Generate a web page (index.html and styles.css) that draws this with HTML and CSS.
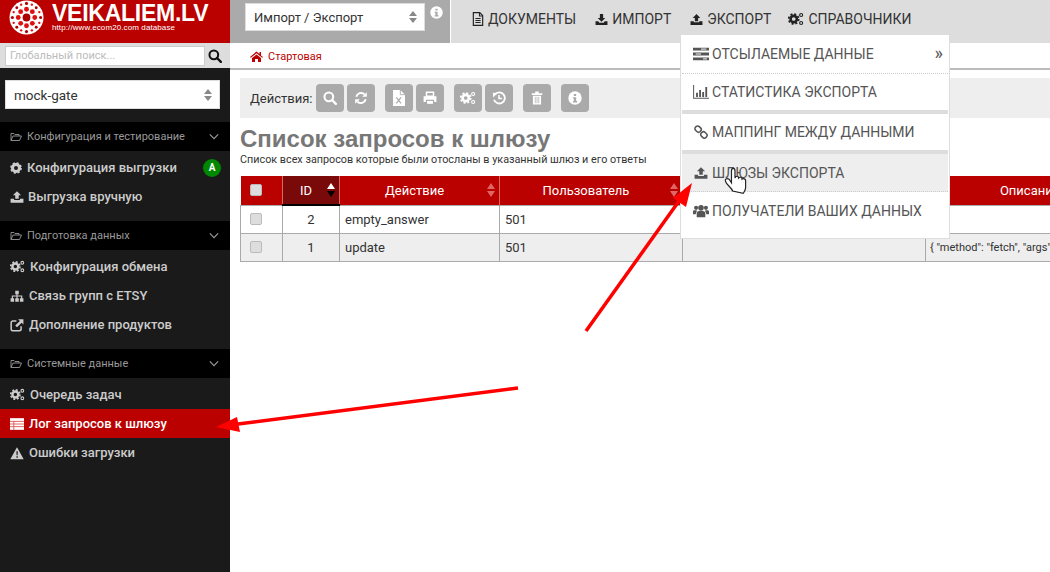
FILE: index.html
```html
<!DOCTYPE html>
<html lang="ru">
<head>
<meta charset="utf-8">
<title>Список запросов к шлюзу</title>
<link rel="stylesheet" href="styles.css">
</head>
<body>
<svg class="defs" width="0" height="0" aria-hidden="true">
  <defs>
    <symbol id="i-folder" viewBox="0 0 24 20"><path d="M2 17V3h6l2 2h8v3M2 17l4-9h17l-4 9H2z" fill="none" stroke="currentColor" stroke-width="1.8" stroke-linejoin="round"/></symbol>
    <symbol id="i-chev" viewBox="0 0 12 8"><path d="M1 1.500l5 5 5-5" fill="none" stroke="currentColor" stroke-width="1.400"/></symbol>
    <symbol id="i-cog" viewBox="0 0 24 24"><circle cx="12" cy="12" r="7" fill="none" stroke="currentColor" stroke-width="6"/><circle cx="12" cy="12" r="10" fill="none" stroke="currentColor" stroke-width="3.5" stroke-dasharray="4.2 3.65"/></symbol>
    <symbol id="i-cogs" viewBox="0 0 28 24"><circle cx="10" cy="12" r="5.5" fill="none" stroke="currentColor" stroke-width="4.5"/><circle cx="10" cy="12" r="8.7" fill="none" stroke="currentColor" stroke-width="3" stroke-dasharray="3.6 3.2"/><circle cx="23" cy="5" r="2.6" fill="none" stroke="currentColor" stroke-width="2"/><circle cx="23" cy="19" r="2.6" fill="none" stroke="currentColor" stroke-width="2"/></symbol>
    <symbol id="i-upload" viewBox="0 0 24 24"><path d="M12 2l7 7h-4v6H9V9H5z" fill="currentColor"/><path d="M1 15h6v2h10v-2h6v7H1z" fill="currentColor"/></symbol>
    <symbol id="i-download" viewBox="0 0 24 24"><path d="M9 2h6v7h4l-7 7-7-7h4z" fill="currentColor"/><path d="M1 15h5l2 3h8l2-3h5v7H1z" fill="currentColor"/></symbol>
    <symbol id="i-sitemap" viewBox="0 0 24 24"><path d="M9 3h6v6h-2v2h8v5h2v6h-6v-6h2v-3h-6v3h2v6H9v-6h2v-3H5v3h2v6H1v-6h2v-5h8V9H9z" fill="currentColor"/></symbol>
    <symbol id="i-ext" viewBox="0 0 24 24"><path d="M11 5H5a3 3 0 0 0-3 3v11a3 3 0 0 0 3 3h11a3 3 0 0 0 3-3v-5" fill="none" stroke="currentColor" stroke-width="2.6"/><path d="M14 2h9v9l-3-3-8 8-3-3 8-8z" fill="currentColor"/></symbol>
    <symbol id="i-table" viewBox="0 0 24 20"><path d="M0 0h24v20H0z" fill="currentColor"/><path d="M0 5.500h24M0 10h24M0 14.500h24M6.500 5v15" stroke="#e05050" stroke-width="1.500" fill="none"/></symbol>
    <symbol id="i-warn" viewBox="0 0 24 22"><path d="M12 1l11.500 20.500H.5z" fill="currentColor"/><path d="M11 8h2.400l-.3 7h-1.800zM11 16.500h2.400v2.500H11z" fill="#1a1a1a"/></symbol>
    <symbol id="i-home" viewBox="0 0 26 22"><path d="M13 1l6 5V2h3v7l4 3-1.500 1.700L13 4.500 1.500 13.700 0 12z" fill="currentColor"/><path d="M4 14l9-7 9 7v8h-6v-6h-6v6H4z" fill="currentColor"/></symbol>
    <symbol id="i-search" viewBox="0 0 24 24"><circle cx="10" cy="10" r="7.500" fill="none" stroke="currentColor" stroke-width="3.500"/><path d="M15.500 15.500L22 22" stroke="currentColor" stroke-width="4" stroke-linecap="round"/></symbol>
    <symbol id="i-refresh" viewBox="0 0 24 24"><path d="M4 10a8.500 8.500 0 0 1 14-4.500M20 14a8.500 8.500 0 0 1-14 4.500" fill="none" stroke="currentColor" stroke-width="3.400"/><path d="M22 2v8h-8zM2 22v-8h8z" fill="currentColor"/></symbol>
    <symbol id="i-excel" viewBox="0 0 18 24"><path d="M0 0h11l7 7v17H0z" fill="currentColor"/><path d="M11 0v7h7" fill="none" stroke="#aaa" stroke-width="1.300"/><path d="M5 11l7 9M12 11l-7 9" stroke="#aaa" stroke-width="1.800"/></symbol>
    <symbol id="i-print" viewBox="0 0 24 24"><path d="M6 2h12v7H6z" fill="none" stroke="currentColor" stroke-width="2.500"/><path d="M1 9h22v10h-4v-4H5v4H1z" fill="currentColor"/><path d="M7 17h10v5H7z" fill="currentColor"/></symbol>
    <symbol id="i-history" viewBox="0 0 24 24"><path d="M5 6a9.500 9.500 0 1 1-1.500 9" fill="none" stroke="currentColor" stroke-width="3.200"/><path d="M1.500 3l8 .5L2 11z" fill="currentColor"/><path d="M12 7v6h5" fill="none" stroke="currentColor" stroke-width="2.600"/></symbol>
    <symbol id="i-trash" viewBox="0 0 20 24"><path d="M1 4h18v3H1zM7 1h6v3H7zM3 8h14v15H3z" fill="currentColor"/><path d="M7 10v11M10 10v11M13 10v11" stroke="#aaa" stroke-width="1.200"/></symbol>
    <symbol id="i-info" viewBox="0 0 24 24"><circle cx="12" cy="12" r="11.500" fill="currentColor"/><path d="M10 5h4v3.500h-4zM8.500 10.500H14V17h1.700v2.500H8.500V17H10v-4H8.500z" fill="#aaa"/></symbol>
    <symbol id="i-doc" viewBox="0 0 20 24"><path d="M2 1h11l5 5v17H2z" fill="none" stroke="currentColor" stroke-width="2"/><path d="M12.500 1v6H18M5.500 11h9M5.500 14.500h9M5.500 18h9" fill="none" stroke="currentColor" stroke-width="1.800"/></symbol>
    <symbol id="i-tasks" viewBox="0 0 24 20" preserveAspectRatio="none"><path d="M0 1h24v4H0zM0 8h24v4H0zM0 15h24v4H0z" fill="currentColor"/><path d="M12 3h8M4 10h8M15 17h6" stroke="#fff" stroke-width="1.400"/></symbol>
    <symbol id="i-chart" viewBox="0 0 26 20" preserveAspectRatio="none"><path d="M1 0v19h25" fill="none" stroke="currentColor" stroke-width="1.600"/><path d="M5 11h3v6H5zM10 7h3v10h-3zM15 10h3v7h-3zM20 3h3v14h-3z" fill="currentColor"/></symbol>
    <symbol id="i-link" viewBox="0 0 24 24"><rect x="1.500" y="2.500" width="11" height="9" rx="4" transform="rotate(45 7 7)" fill="none" stroke="currentColor" stroke-width="2.600"/><rect x="11.500" y="12.500" width="11" height="9" rx="4" transform="rotate(45 17 17)" fill="none" stroke="currentColor" stroke-width="2.600"/></symbol>
    <symbol id="i-users" viewBox="0 0 26 22" preserveAspectRatio="none"><circle cx="13" cy="6" r="4.500" fill="currentColor"/><circle cx="5" cy="6" r="3.300" fill="currentColor"/><circle cx="21" cy="6" r="3.300" fill="currentColor"/><path d="M6 21v-6a4 4 0 0 1 4-4h6a4 4 0 0 1 4 4v6zM0 16v-4a2 2 0 0 1 2-2h4v2a5 5 0 0 0-1.500 4zM26 16v-4a2 2 0 0 0-2-2h-4v2a5 5 0 0 1 1.500 4z" fill="currentColor"/></symbol>
  </defs>
</svg>

<aside class="sidebar">
  <div class="logo">
    <svg class="logo-mark" viewBox="0 0 36 36" aria-hidden="true">
      <circle cx="18" cy="18" r="17.500" fill="#fff"/>
      <g fill="#a00">
        <circle cx="18" cy="18" r="4"/>
        <circle cx="18" cy="32.500" r="1.600"/><circle cx="18" cy="3.500" r="1.600"/><circle cx="3.500" cy="18" r="1.600"/><circle cx="32.500" cy="18" r="1.600"/>
        <circle cx="8" cy="8" r="1.500"/><circle cx="28" cy="8" r="1.500"/><circle cx="8" cy="28" r="1.500"/><circle cx="28" cy="28" r="1.500"/>
      </g>
      <g fill="#d11">
        <circle cx="18" cy="9.500" r="2.500"/><circle cx="18" cy="26.500" r="2.500"/><circle cx="9.500" cy="18" r="2.500"/><circle cx="26.500" cy="18" r="2.500"/>
        <circle cx="12" cy="12" r="2.500"/><circle cx="24" cy="12" r="2.500"/><circle cx="12" cy="24" r="2.500"/><circle cx="24" cy="24" r="2.500"/>
        <circle cx="12.500" cy="4.800" r="1.200"/><circle cx="23.500" cy="4.800" r="1.200"/><circle cx="12.500" cy="31.200" r="1.200"/><circle cx="23.500" cy="31.200" r="1.200"/>
        <circle cx="4.800" cy="12.500" r="1.200"/><circle cx="31.200" cy="12.500" r="1.200"/><circle cx="4.800" cy="23.500" r="1.200"/><circle cx="31.200" cy="23.500" r="1.200"/>
      </g>
    </svg>
    <div class="logo-text">
      <div class="logo-name">VEIKALIEM.LV</div>
      <div class="logo-url">http://www.ecom20.com database</div>
    </div>
  </div>
  <div class="global-search">
    <div class="search-input">Глобальный поиск...</div>
    <svg class="search-icon"><use href="#i-search"/></svg>
  </div>
  <div class="gate-wrap">
    <div class="select gate-select">mock-gate<span class="updown"></span></div>
  </div>

  <div class="side-head"><svg class="fold"><use href="#i-folder"/></svg><span>Конфигурация и тестирование</span><svg class="chev"><use href="#i-chev"/></svg></div>
  <ul class="side-list">
    <li class="side-item"><svg class="si si-cog"><use href="#i-cog"/></svg><span>Конфигурация выгрузки</span><b class="badge">A</b></li>
    <li class="side-item"><svg class="si si-up"><use href="#i-upload"/></svg><span>Выгрузка вручную</span></li>
  </ul>

  <div class="side-head"><svg class="fold"><use href="#i-folder"/></svg><span>Подготовка данных</span><svg class="chev"><use href="#i-chev"/></svg></div>
  <ul class="side-list">
    <li class="side-item"><svg class="si si-cogs"><use href="#i-cogs"/></svg><span>Конфигурация обмена</span></li>
    <li class="side-item"><svg class="si"><use href="#i-sitemap"/></svg><span>Связь групп с ETSY</span></li>
    <li class="side-item"><svg class="si"><use href="#i-ext"/></svg><span>Дополнение продуктов</span></li>
  </ul>

  <div class="side-head"><svg class="fold"><use href="#i-folder"/></svg><span>Системные данные</span><svg class="chev"><use href="#i-chev"/></svg></div>
  <ul class="side-list">
    <li class="side-item"><svg class="si si-cogs"><use href="#i-cogs"/></svg><span>Очередь задач</span></li>
    <li class="side-item active"><svg class="si"><use href="#i-table"/></svg><span>Лог запросов к шлюзу</span></li>
    <li class="side-item"><svg class="si"><use href="#i-warn"/></svg><span>Ошибки загрузки</span></li>
  </ul>
</aside>

<div class="main">
  <header class="topbar">
    <div class="module">
      <div class="select module-select">Импорт / Экспорт<span class="updown"></span></div>
      <svg class="module-info"><use href="#i-info"/></svg>
    </div>
    <nav class="topnav">
      <a class="nav-link"><svg class="ni ni-doc"><use href="#i-doc"/></svg>ДОКУМЕНТЫ</a>
      <a class="nav-link"><svg class="ni"><use href="#i-download"/></svg>ИМПОРТ</a>
      <a class="nav-link"><svg class="ni"><use href="#i-upload"/></svg>ЭКСПОРТ</a>
      <a class="nav-link nav-last"><svg class="ni ni-cogs"><use href="#i-cogs"/></svg>СПРАВОЧНИКИ</a>
    </nav>
  </header>

  <div class="crumbs"><svg class="crumb-home"><use href="#i-home"/></svg><span>Стартовая</span></div>

  <div class="actions">
    <span class="actions-label">Действия:</span>
    <div class="btn-group">
      <button class="act"><svg class="ai"><use href="#i-search"/></svg></button>
      <button class="act"><svg class="ai"><use href="#i-refresh"/></svg></button>
    </div>
    <div class="btn-group">
      <button class="act"><svg class="ai ai-file"><use href="#i-excel"/></svg></button>
      <button class="act"><svg class="ai"><use href="#i-print"/></svg></button>
    </div>
    <div class="btn-group">
      <button class="act"><svg class="ai ai-wide"><use href="#i-cogs"/></svg></button>
      <button class="act"><svg class="ai"><use href="#i-history"/></svg></button>
    </div>
    <div class="btn-group">
      <button class="act"><svg class="ai"><use href="#i-trash"/></svg></button>
    </div>
    <div class="btn-group">
      <button class="act"><svg class="ai"><use href="#i-info"/></svg></button>
    </div>
  </div>

  <h1 class="page-title">Список запросов к шлюзу</h1>
  <p class="page-sub">Список всех запросов которые были отосланы в указанный шлюз и его ответы</p>

  <table class="grid">
    <colgroup>
      <col class="c-check"><col class="c-id"><col class="c-action"><col class="c-user"><col class="c-blank"><col class="c-desc">
    </colgroup>
    <thead>
      <tr>
        <th><span class="check"></span></th>
        <th class="sorted has-sort">ID<span class="sort sort-on"></span></th>
        <th class="has-sort">Действие<span class="sort"></span></th>
        <th class="has-sort">Пользователь<span class="sort"></span></th>
        <th></th>
        <th>Описание</th>
      </tr>
    </thead>
    <tbody>
      <tr>
        <td class="center"><span class="check"></span></td>
        <td class="center">2</td>
        <td>empty_answer</td>
        <td>501</td>
        <td></td>
        <td></td>
      </tr>
      <tr class="alt">
        <td class="center"><span class="check"></span></td>
        <td class="center">1</td>
        <td>update</td>
        <td>501</td>
        <td></td>
        <td class="desc">{ "method": "fetch", "args": [] }</td>
      </tr>
    </tbody>
  </table>

  <div class="dropdown">
    <div class="dd-item dd-first"><svg class="di"><use href="#i-tasks"/></svg>ОТСЫЛАЕМЫЕ ДАННЫЕ<span class="dd-more">»</span></div>
    <div class="dd-item dd-band"><svg class="di"><use href="#i-chart"/></svg>СТАТИСТИКА ЭКСПОРТА</div>
    <div class="dd-item dd-band"><svg class="di"><use href="#i-link"/></svg>МАППИНГ МЕЖДУ ДАННЫМИ</div>
    <div class="dd-item dd-dotted dd-hover"><svg class="di"><use href="#i-upload"/></svg>ШЛЮЗЫ ЭКСПОРТА</div>
    <div class="dd-item"><svg class="di"><use href="#i-users"/></svg>ПОЛУЧАТЕЛИ ВАШИХ ДАННЫХ</div>
  </div>
</div>

<svg class="annot" viewBox="0 0 1050 572" aria-hidden="true">
  <path d="M586 331L679 201" stroke="#f00" stroke-width="3.500" fill="none"/>
  <path d="M692 183L686 207 673 198z" fill="#f00"/>
  <path d="M518 388L238 424" stroke="#f00" stroke-width="3.500" fill="none"/>
  <path d="M216 427L237 417 240 432z" fill="#f00"/>
  <path transform="translate(735 191) scale(1.180) translate(-735 -184)" d="M733 184c-1-3-5-5-6-8-1-2 1-3 3-2l2 3v-10c0-3 3-3 3 0v6c1-2 3-2 3 0 1-1 3-1 3 1 1-1 3 0 3 1v6c0 2-1 3-2 5z" fill="#fff" stroke="#222" stroke-width="1"/>
</svg>
</body>
</html>
```
FILE: styles.css
```css
* { box-sizing: border-box; }
html, body { margin: 0; padding: 0; }
body {
  width: 1050px;
  height: 572px;
  overflow: hidden;
  display: flex;
  position: relative;
  background: #fff;
  font-family: Roboto, "Liberation Sans", sans-serif;
  font-size: 13px;
  color: #333;
}
.defs { position: absolute; }
svg { display: block; flex: none; }

/* Sidebar */
.sidebar { width: 230px; flex: none; height: 572px; background: #1a1a1a; color: #ccc; }
.logo { height: 43px; background: #b00; display: flex; padding: 0 0 0 9px; gap: 8px; }
.logo-mark { width: 35px; height: 35px; }
.logo-text { color: #fff; padding-top: 3px; }
.logo-name { font: bold 23px/21px "Liberation Sans", sans-serif; letter-spacing: -.25px; }
.logo-url { font: 8px/8px "Liberation Sans", sans-serif; letter-spacing: .1px; }
.global-search { height: 25px; background: #ddd; display: flex; align-items: center; padding-left: 5px; gap: 3px; }
.search-input { width: 200px; height: 20px; background: #fff; border: 1px solid #ccc; color: #bbb; font-size: 11px; line-height: 18px; padding-left: 4px; }
.search-icon { width: 14px; height: 14px; color: #111; }
.gate-wrap { height: 54px; padding: 12px 10px 0 5px; }
.select { background: #fff; border: 1px solid #ddd; color: #333; position: relative; }
.gate-select { height: 29px; line-height: 28px; padding-left: 8px; font-size: 13.500px; }
.updown { position: absolute; right: 7px; top: 50%; margin-top: -6px; width: 0; height: 0; border-left: 4.500px solid transparent; border-right: 4.500px solid transparent; border-bottom: 5px solid #888; }
.updown::after { content: ""; position: absolute; left: -4.500px; top: 7px; width: 0; height: 0; border-left: 4.500px solid transparent; border-right: 4.500px solid transparent; border-top: 5px solid #888; }
.side-head { height: 29px; background: #000; color: #999; font-size: 11px; display: flex; align-items: center; padding-left: 10px; gap: 5px; }
.fold { width: 12px; height: 10px; }
.chev { width: 10px; height: 7px; margin-left: auto; margin-right: 11px; color: #999; }
.side-list { list-style: none; margin: 0; padding: 2px 0 10px; }
.side-item { height: 29px; display: flex; align-items: center; padding-left: 10px; gap: 5px; font-size: 13px; color: #ccc; font-weight: 500; }
.side-item.active { background: #b00; color: #fff; }
.si { width: 14px; height: 14px; }
.si-up { margin-right: -1px; }
.si-cog { width: 12px; height: 12px; }
.si-cogs { width: 15px; height: 13px; }
.badge { margin-left: auto; margin-right: 9px; width: 18px; height: 18px; border-radius: 50%; background: #080; color: #fff; font-size: 10px; line-height: 18px; text-align: center; }

/* Main */
.main { width: 820px; flex: none; height: 572px; position: relative; overflow: hidden; }
.topbar { height: 43px; display: flex; }
.module { width: 220px; background: #aaa; padding: 3px 0 0 15px; display: flex; }
.module-select { width: 180px; height: 28px; line-height: 27px; padding-left: 8px; font-size: 13px; }
.module-info { width: 13px; height: 13px; color: #fff; margin: 3px 0 0 5px; }
.topnav { flex: 1; margin-left: 1px; background: #ddd; display: flex; padding-left: 21px; gap: 19px; align-items: flex-start; }
.nav-link { display: flex; align-items: center; height: 38px; font-size: 14px; color: #333; gap: 4px; }
.nav-last { margin-left: -2px; }
.ni { width: 13px; height: 13px; color: #222; }
.ni-doc { width: 12px; height: 14px; }
.ni-cogs { width: 16px; height: 14px; }
.crumbs { height: 27px; border-bottom: 2px solid #bbb; display: flex; align-items: center; padding: 1px 0 0 20px; gap: 5px; color: #b00; font-size: 11px; }
.crumb-home { width: 13px; height: 11px; }
.actions { height: 40px; margin: 8px 0 0 10px; background: #eee; display: flex; align-items: center; padding-left: 10px; gap: 10px; }
.actions-label { font-size: 13px; color: #333; margin-right: -6px; }
.btn-group { display: flex; gap: 3px; }
.act { width: 28px; height: 28px; padding: 0; border: 0; border-radius: 4px; background: #aaa; color: #fff; display: flex; align-items: center; justify-content: center; }
.ai { width: 14px; height: 14px; }
.ai-wide { width: 16px; }
.ai-file { width: 12px; height: 16px; }
.page-title { margin: 6px 0 0 10px; font: bold 24px/30px "Liberation Sans", sans-serif; color: #777; }
.page-sub { margin: -1px 0 0 10px; font-size: 10.800px; line-height: 13px; color: #333; }

/* Table */
.grid { margin: 10px 0 0 10px; width: 893px; table-layout: fixed; border-collapse: collapse; font-size: 13px; }
.c-check { width: 42px; } .c-id { width: 57px; } .c-action { width: 160px; } .c-user { width: 183px; } .c-blank { width: 243px; } .c-desc { width: 208px; }
.grid th { height: 29px; background: #b00; color: #fff; font-weight: 400; position: relative; border-left: 1px solid #e06666; padding: 0; }
.grid th:first-child { border-left: 0; }
.grid th.has-sort { padding-right: 10px; }
.grid th.sorted { background: #7a0a0a; border-bottom: 2px solid #000; }
.grid td { height: 28px; border: 1px solid #aaa; padding: 0 5px; color: #333; }
.grid td.center { text-align: center; padding: 0; }
.grid .alt td { background: #eee; }
.grid td.desc { font-size: 11px; padding: 0 4px; white-space: nowrap; overflow: hidden; }
.check { display: block; width: 12px; height: 12px; margin: 0 auto 0 9px; background: #ddd; border: 1px solid #bbb; border-radius: 2px; }
.sort { position: absolute; right: 4px; top: 7px; width: 0; height: 0; border-left: 4px solid transparent; border-right: 4px solid transparent; border-bottom: 6px solid #e06666; }
.sort::after { content: ""; position: absolute; left: -4px; top: 8px; border-left: 4px solid transparent; border-right: 4px solid transparent; border-top: 6px solid #e06666; }
.sort-on { border-bottom-color: #fff; }
.sort-on::after { border-top-color: #000; }

/* Dropdown */
.dropdown { position: absolute; left: 450px; top: 34px; width: 270px; height: 205px; background: #fff; border: 1px solid #ddd; padding: 0 1px; font-size: 14px; color: #555; }
.dd-item { display: flex; align-items: center; padding-left: 11px; gap: 3px; height: 37px; position: relative; }
.dd-first { border-bottom: 1px dotted #ccc; height: 39px; }
.dd-dotted { border-bottom: 1px dotted #ccc; height: 38px; }
.dd-band { border-bottom: 4px solid #ddd; height: 40px; }
.dd-hover { background: #eee; }
.di { width: 16px; height: 14px; color: #555; }
.dd-more { position: absolute; right: 5px; top: 8px; font-size: 18px; line-height: 20px; }

/* Annotations over the screenshot */
.annot { position: absolute; left: 0; top: 0; width: 1050px; height: 572px; pointer-events: none; }
```
